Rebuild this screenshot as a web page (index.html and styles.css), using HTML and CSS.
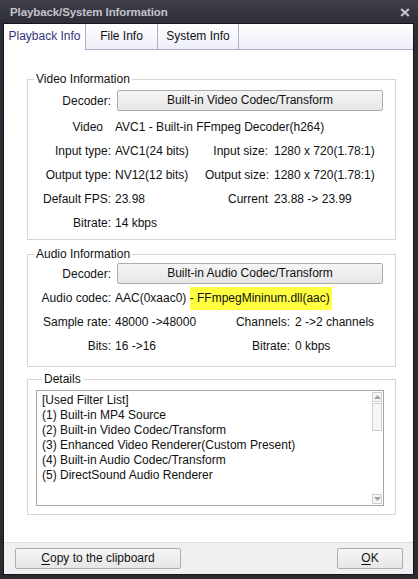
FILE: index.html
```html
<!DOCTYPE html>
<html>
<head>
<meta charset="utf-8">
<link rel="stylesheet" href="styles.css">
</head>
<body>
<div class="window">
  <div class="titlebar">
    <span class="title">Playback/System Information</span>
    <svg class="close" width="10" height="9" viewBox="0 0 10 9"><path d="M1.2 1 L8.8 8 M8.8 1 L1.2 8" stroke="#c4c4cc" stroke-width="2.2" fill="none"/></svg>
  </div>
  <div class="client">
    <div class="tabs">
      <div class="tab t1 active">Playback Info</div>
      <div class="tab t2">File Info</div>
      <div class="tab t3">System Info</div>
    </div>
    <div class="panel">
      <fieldset class="group video">
        <legend>Video Information</legend>
        <div class="decoder-row">
          <span class="dlbl">Decoder:</span>
          <button class="btn decoder">Built-in Video Codec/Transform</button>
        </div>
        <div class="vgrid">
          <span class="l1 vlbl">Video</span><span class="span3">AVC1 - Built-in FFmpeg Decoder(h264)</span>
          <span class="l1">Input type:</span><span>AVC1(24 bits)</span><span class="l2">Input size:</span><span>1280 x 720(1.78:1)</span>
          <span class="l1">Output type:</span><span>NV12(12 bits)</span><span class="l2">Output size:</span><span>1280 x 720(1.78:1)</span>
          <span class="l1">Default FPS:</span><span>23.98</span><span class="l2">Current</span><span>23.88 -&gt; 23.99</span>
          <span class="l1">Bitrate:</span><span class="span3">14 kbps</span>
        </div>
      </fieldset>
      <fieldset class="group audio">
        <legend>Audio Information</legend>
        <div class="decoder-row">
          <span class="dlbl">Decoder:</span>
          <button class="btn decoder">Built-in Audio Codec/Transform</button>
        </div>
        <div class="agrid">
          <span class="l1 r1">Audio codec:</span><span class="span3 r1">AAC(0xaac0) <span class="hl">- FFmpegMininum.dll(aac)</span></span>
          <span class="l1 r2">Sample rate:</span><span class="r2">48000 -&gt;48000</span><span class="l2 r2">Channels:</span><span class="r2">2 -&gt;2 channels</span>
          <span class="l1 r3">Bits:</span><span class="r3">16 -&gt;16</span><span class="l2 r3">Bitrate:</span><span class="r3">0 kbps</span>
        </div>
      </fieldset>
      <fieldset class="group details">
        <legend>Details</legend>
        <div class="textbox">
          <div class="lines">
            <div>[Used Filter List]</div>
            <div>(1) Built-in MP4 Source</div>
            <div>(2) Built-in Video Codec/Transform</div>
            <div>(3) Enhanced Video Renderer(Custom Present)</div>
            <div>(4) Built-in Audio Codec/Transform</div>
            <div>(5) DirectSound Audio Renderer</div>
          </div>
          <div class="scrollbar">
            <div class="sbtn"><svg width="7" height="4" viewBox="0 0 7 4"><path d="M0 4 L3.5 0 L7 4 Z" fill="#a4a4a4"/></svg></div>
            <div class="thumb"></div>
            <div class="track"></div>
            <div class="sbtn"><svg width="7" height="4" viewBox="0 0 7 4"><path d="M0 0 L3.5 4 L7 0 Z" fill="#a4a4a4"/></svg></div>
          </div>
        </div>
      </fieldset>
    </div>
    <div class="footer">
      <button class="btn copy"><u>C</u>opy to the clipboard</button>
      <button class="btn ok"><u>O</u>K</button>
    </div>
  </div>
</div>
</body>
</html>
```
FILE: styles.css
```css
* { box-sizing: border-box; }
html, body { margin: 0; padding: 0; }
body {
  width: 418px;
  height: 579px;
  overflow: hidden;
  font-family: "Liberation Sans", Arial, sans-serif;
  font-size: 12px;
  color: #111;
  background: #2b2b33;
}
.window {
  width: 418px;
  height: 579px;
  display: flex;
  flex-direction: column;
  padding: 0 5px 5px 4px;
  background: linear-gradient(#3f3f4b 0px, #2e2e38 24px, #2a2a32 100%);
}
.titlebar {
  height: 24px;
  flex: none;
  display: flex;
  align-items: center;
  justify-content: space-between;
  padding: 0 3px 0 6px;
}
.title {
  font-weight: bold;
  font-size: 11.5px;
  color: #c4c4cc;
  letter-spacing: -0.1px;
}
.close { display: block; margin-top: 1px; }
.client {
  flex: 1;
  background: #fff;
  display: flex;
  flex-direction: column;
  outline: 1px solid #15151a;
}
.tabs {
  height: 26px;
  flex: none;
  display: flex;
  border-bottom: 1px solid #aeaeca;
  background: linear-gradient(#ffffff, #ededf9);
}
.tab {
  height: 25px;
  line-height: 25px;
  text-align: center;
  border-right: 1px solid #aeaeca;
  color: #111;
}
.tab.active {
  background: #fff;
  height: 26px;
  color: #34347a;
  margin-bottom: -1px;
}
.t1 { width: 82px; }
.t2 { width: 72px; }
.t3 { width: 81px; }
.panel {
  flex: 1;
  padding: 22px 17px 0 23px;
  display: flex;
  flex-direction: column;
}
.group {
  margin: 0;
  padding: 0;
  border: 1px solid #d6d6d6;
  min-width: 0;
}
.group legend {
  padding: 0 2px;
  margin-left: 6px;
  line-height: 14px;
  height: 14px;
}
.video { padding: 4px 0 4px 0; }
.audio { margin-top: 7px; padding: 2px 0 8px 0; }
.details { margin-top: 5px; padding: 4px 0 8px 8px; }
.decoder-row {
  display: flex;
  align-items: center;
  height: 21px;
}
.dlbl {
  width: 83px;
  text-align: right;
  margin-right: 6px;
}
.btn {
  font-family: "Liberation Sans", Arial, sans-serif;
  font-size: 12px;
  color: #111;
  height: 21px;
  padding: 0;
  border: 1px solid #acacac;
  border-radius: 2px;
  background: linear-gradient(#f6f6f6, #e6e6e6);
  line-height: 19px;
}
.decoder { width: 266px; }
.btn u { text-decoration: underline; text-underline-offset: 2px; }
.vgrid {
  margin-top: 4px;
  display: grid;
  grid-template-columns: 87px 90px 69px 1fr;
  grid-auto-rows: 24px;
  line-height: 24px;
  white-space: nowrap;
}
.agrid {
  margin-top: 3px;
  display: grid;
  grid-template-columns: 87px 115px 65px 1fr;
  grid-template-rows: 23px 24px 24px;
  white-space: nowrap;
}
.agrid .r1 { line-height: 23px; }
.agrid .r2, .agrid .r3 { line-height: 24px; }
.l1 { text-align: right; padding-right: 4px; }
.vgrid .l2 { text-align: right; padding-right: 6px; }
.agrid .l2 { text-align: right; padding-right: 5px; }
.vlbl { padding-right: 12px; }
.span3 { grid-column: 2 / 5; }
.hl {
  display: inline-block;
  background: #ffff40;
  height: 23px;
  padding-right: 2px;
}
.textbox {
  width: 348px;
  height: 116px;
  border: 1px solid #a5a5a5;
  display: flex;
  background: #fff;
}
.lines {
  flex: 1;
  padding: 2px 0 0 5px;
  line-height: 15px;
  white-space: nowrap;
}
.scrollbar {
  width: 12px;
  display: flex;
  flex-direction: column;
  padding: 1px 1px 1px 1px;
  gap: 1px;
}
.sbtn {
  height: 10px;
  border: 1px solid #cfcfcf;
  background: #f4f4f4;
  display: flex;
  align-items: center;
  justify-content: center;
}
.thumb {
  height: 28px;
  border: 1px solid #cfcfcf;
  background: #f6f6f6;
}
.track { flex: 1; }
.footer {
  height: 32px;
  flex: none;
  border-top: 1px solid #dcdcdc;
  background: #f0f0f0;
  display: flex;
  justify-content: space-between;
  padding: 5px 10px 0 11px;
}
.copy { width: 166px; }
.ok { width: 66px; }
```
